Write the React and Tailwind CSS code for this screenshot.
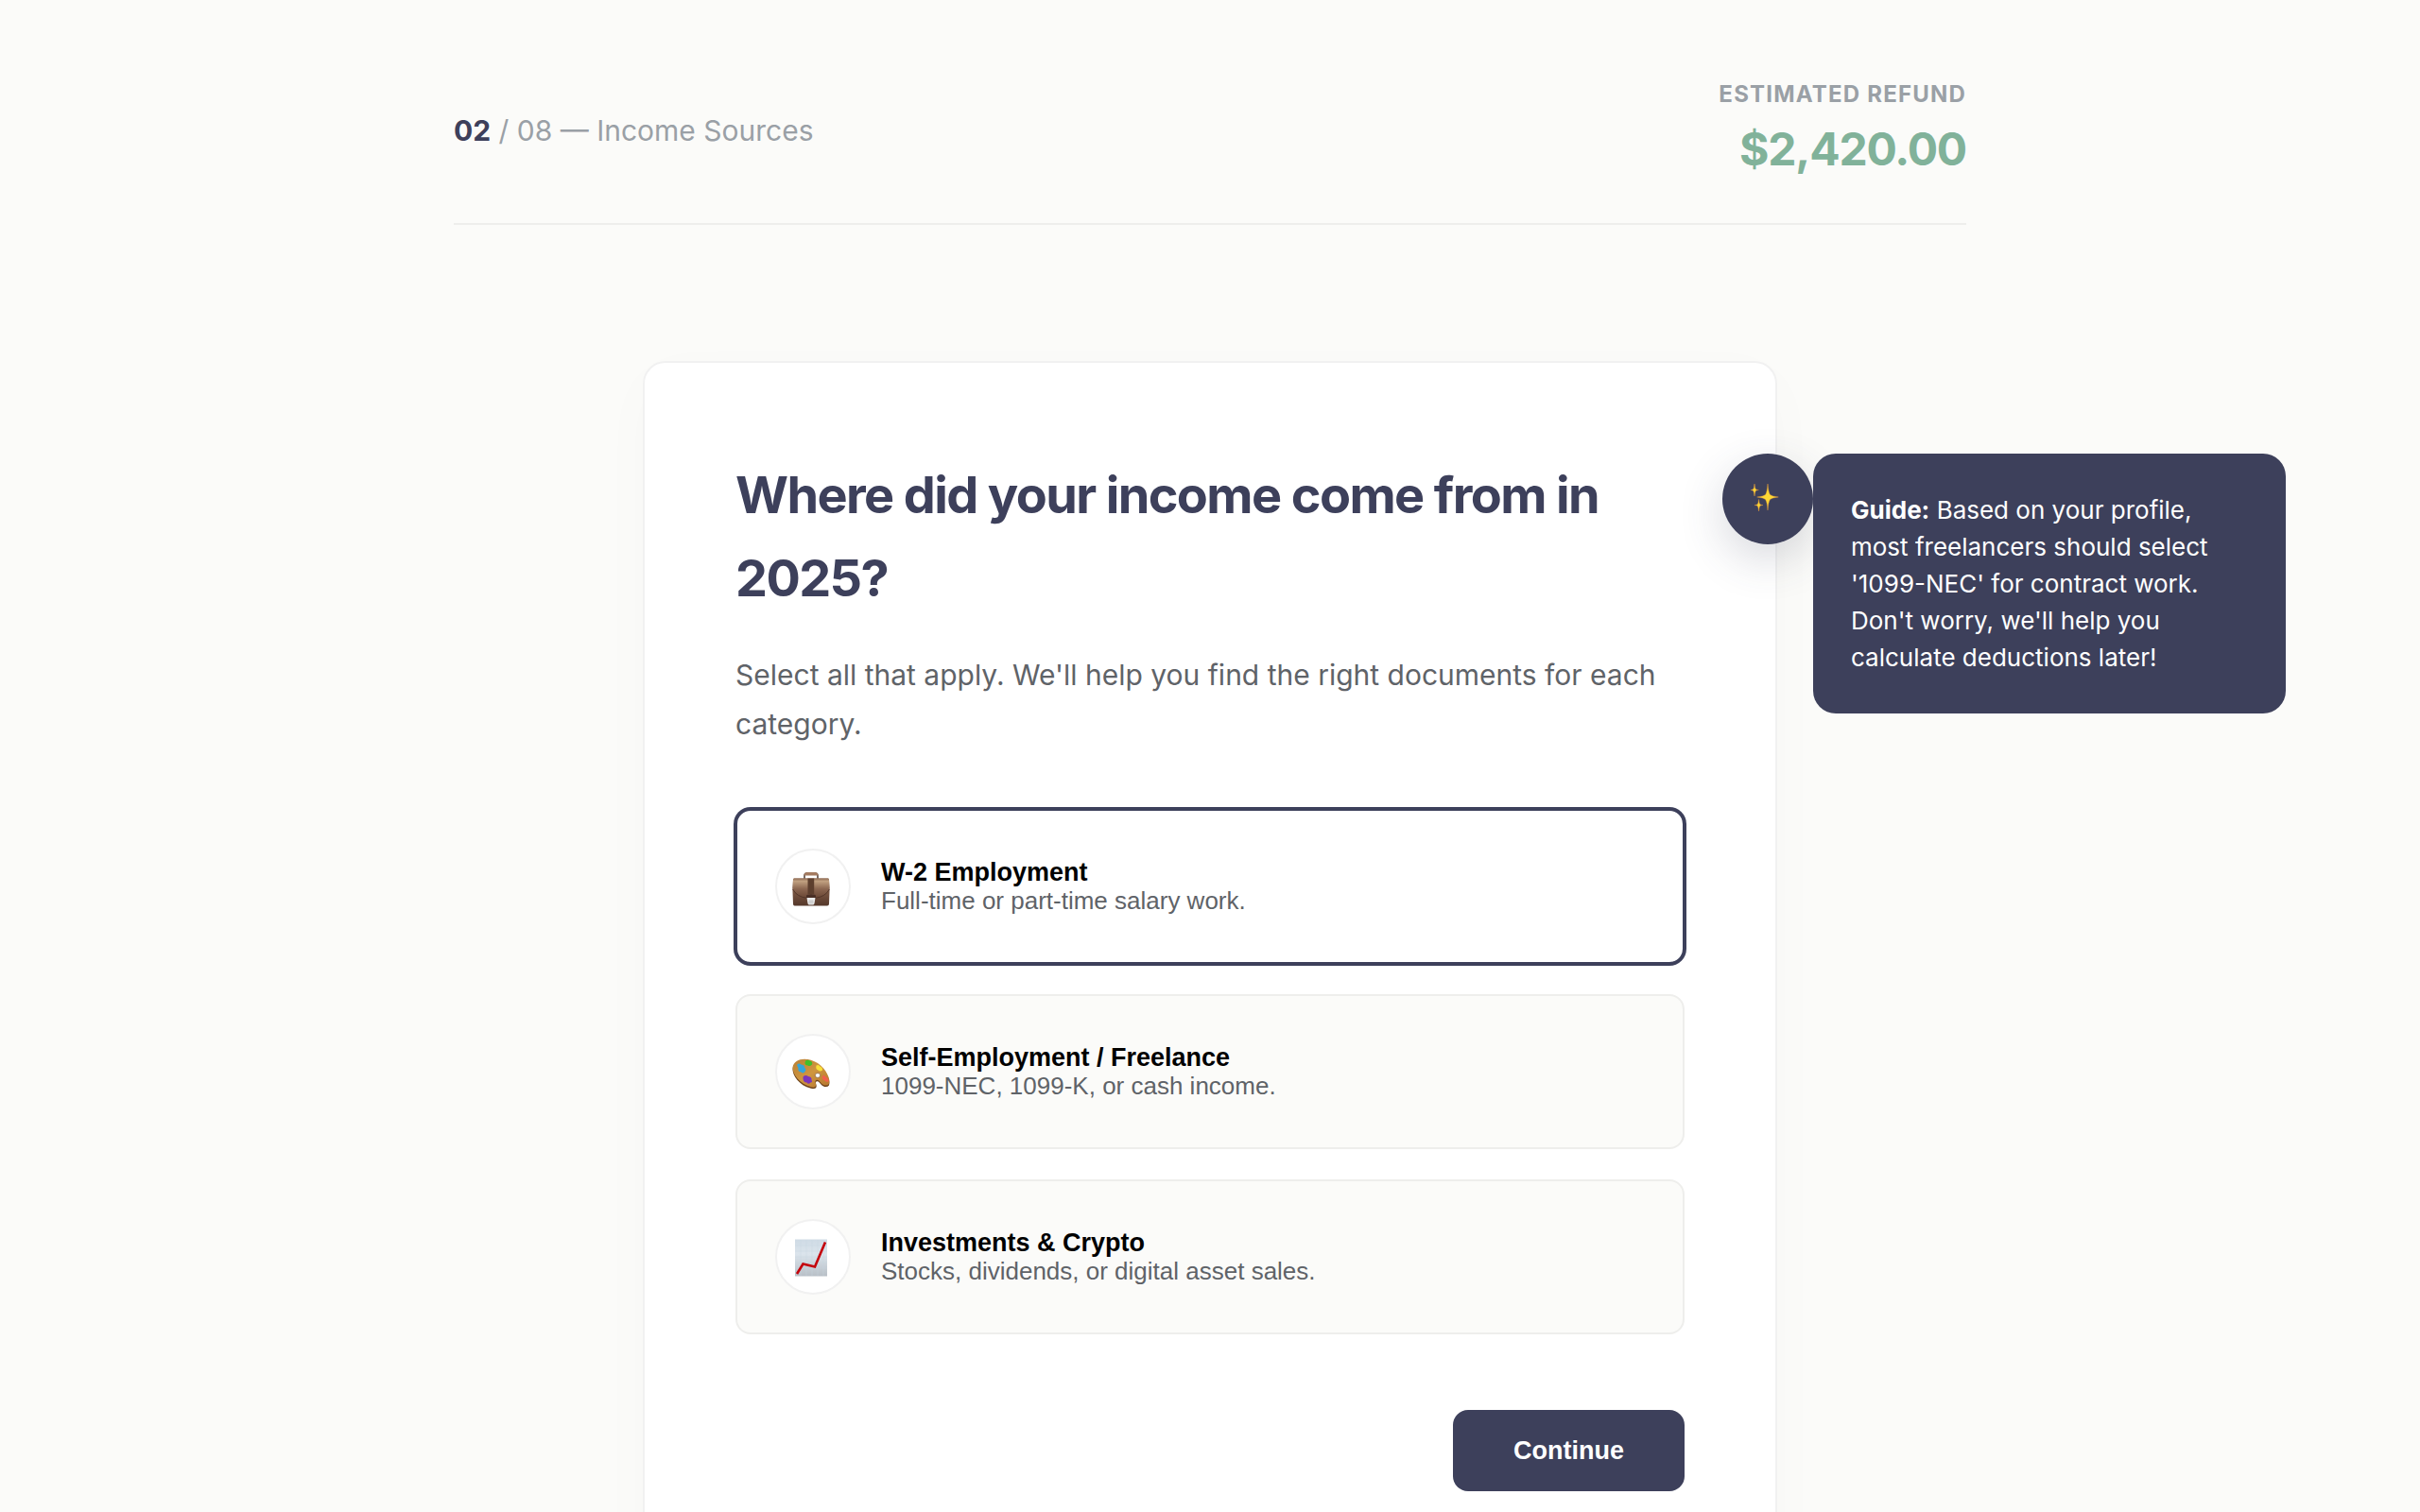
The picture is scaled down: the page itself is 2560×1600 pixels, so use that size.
import React, { useState } from 'react';

const sources = [
  {
    id: 'w2',
    title: 'W-2 Employment',
    text: 'Full-time or part-time salary work.',
    Icon: BriefcaseIcon,
  },
  {
    id: 'self',
    title: 'Self-Employment / Freelance',
    text: '1099-NEC, 1099-K, or cash income.',
    Icon: PaletteIcon,
  },
  {
    id: 'invest',
    title: 'Investments & Crypto',
    text: 'Stocks, dividends, or digital asset sales.',
    Icon: ChartIcon,
  },
];

function BriefcaseIcon() {
  return (
    <svg width="44" height="44" viewBox="0 -5 44 44" aria-hidden="true">
      <defs>
        <linearGradient id="leather" x1="0" y1="0" x2="0" y2="1">
          <stop offset="0" stopColor="#a07c62" />
          <stop offset="0.4" stopColor="#7f5a45" />
          <stop offset="1" stopColor="#55382b" />
        </linearGradient>
        <linearGradient id="flap" x1="0" y1="0" x2="0" y2="1">
          <stop offset="0" stopColor="#8f6c54" />
          <stop offset="0.15" stopColor="#c0a080" />
          <stop offset="0.55" stopColor="#8b6650" />
          <stop offset="1" stopColor="#6b4836" />
        </linearGradient>
      </defs>
      <path d="M13 9V5.5Q13 3 16 3H24Q27 3 27 5.5V9" fill="none" stroke="#3f2c24" strokeWidth="1.4" />
      <path d="M12.5 5.4Q12.5 2 16.5 2H23.5Q27.5 2 27.5 5.4Z" fill="#a47b60" />
      <path d="M2 8.5H38Q39 8.5 39 10L39.6 20 39 35.5Q39 37.5 37 37.5H2.6Q1 37.5 1 35.5L.4 20 1 10Q1 8.5 2 8.5Z" fill="url(#leather)" />
      <path d="M2 8.5H38Q39 8.5 39 10L39.5 19Q36 27.5 25 28.8H15Q4 27.5.5 19L1 10Q1 8.5 2 8.5Z" fill="url(#flap)" />
      <path d="M.6 20Q5 28 15 29.2H25Q35 28 39.4 20" fill="none" stroke="#4b3024" strokeWidth="0.8" />
      <path d="M16.5 8.5H23.2V25H16.5Z" fill="#5d3f2e" />
      <path d="M15 27Q15 25.2 20 25.2Q25 25.2 25 27V30H15Z" fill="#4a2f25" />
      <path d="M15.5 29H24.5L23.5 35Q23.3 36.6 21.8 36.6H18.2Q16.7 36.6 16.5 35Z" fill="#ececec" />
      <path d="M17.5 31.5H22.5V35.5H17.5Z" fill="#cfcfcf" />
    </svg>
  );
}

function PaletteIcon() {
  return (
    <svg width="44" height="44" viewBox="0 -5 44 44" aria-hidden="true">
      <defs>
        <linearGradient id="wood" x1="0" y1="0" x2="1" y2="1">
          <stop offset="0" stopColor="#b98136" />
          <stop offset="0.5" stopColor="#cf963f" />
          <stop offset="1" stopColor="#b5752e" />
        </linearGradient>
      </defs>
      <path d="M.5 14C.3 21 7 31.5 20 34.8Q24.5 35.8 25.5 33.5C26.5 31 23.5 28.5 26 27.3C28.5 26.5 29.5 30.5 33 32.5Q37 34 39 31.5C41 26.5 36 15.5 27 9.5C16 2.5 2 4 .5 14Z" fill="#6d421a" />
      <path d="M.5 12.5C.3 20 8 30 20 33.3Q24 34.3 25 32.3C26 29.8 22.8 27 25.8 25.8C28.5 25 29.5 29 33 31Q37 32.5 39 30C41 25 36 14 27 8C16 1 2 2.5.5 12.5Z" fill="url(#wood)" />
      <path d="M5 10Q7 7.5 9.5 9.5Q13.5 10 13 12.5Q15.5 15 13.5 17Q12 19.5 9.5 17.5Q5.5 17 6.5 13.5Z" fill="#36a5d8" />
      <path d="M14 5.5Q17 3.8 19 5.5Q22 7 21 9.5Q18.5 12 16.5 10.5Q13.5 10 13.5 8Z" fill="#41bf2a" />
      <path d="M25.5 10.5Q28 9 29.5 11.5Q32.5 12.5 32 15.5Q29.5 17.5 27.5 15.5Q24.5 14.5 25.5 10.5Z" fill="#f8e03a" />
      <path d="M32 21.5Q34 20 35.5 22.5Q39 24.5 38.5 27.5Q36 28.5 34.5 26.5Q31 25.5 32 21.5Z" fill="#f2604c" />
      <path d="M11.5 22.5Q14 20 17 22Q21 22.5 20.5 26Q22 28 19.5 28.5Q17 31 15.5 28.5Q11 28.5 11.5 22.5Z" fill="#7c35ba" />
      <ellipse cx="27" cy="21" rx="2.8" ry="2.4" fill="#fff" stroke="#6d421a" strokeWidth="0.6" />
    </svg>
  );
}

function ChartIcon() {
  return (
    <svg width="44" height="44" viewBox="0 -3 44 44" aria-hidden="true">
      <defs>
        <linearGradient id="sheet" x1="0" y1="0" x2="0" y2="1">
          <stop offset="0" stopColor="#cfdbe5" />
          <stop offset="0.4" stopColor="#dbe4ec" />
          <stop offset="1" stopColor="#b8bfc6" />
        </linearGradient>
      </defs>
      <rect x="3" y="0.5" width="34" height="39" fill="url(#sheet)" />
      <path d="M9 1V39M15 1V39M21 1V39M27 1V39M33 1V39M3 7H37M3 13H37M3 19H37M3 25H37M3 31H37" stroke="#c6d4e0" strokeWidth="0.4" />
      <path d="M5 37L11.5 26.5L24 29.5L35 3.5" fill="none" stroke="#c4040c" strokeWidth="2.6" />
    </svg>
  );
}

function SparklesIcon() {
  return (
    <svg width="36" height="36" viewBox="0 -2 36 36" aria-hidden="true">
      <g fill="#fdd835" stroke="#e8963a" strokeWidth="0.4">
        <path d="M18 0Q18.6 9 20.5 11.5Q22.5 13.3 29.3 14Q22.5 14.7 20.5 16.5Q18.6 19 18 28Q17.4 19 15.5 16.5Q13.5 14.7 6.7 14Q13.5 13.3 15.5 11.5Q17.4 9 18 0Z" />
        <path d="M4 0Q4.4 4.5 5.2 5.5Q6 6.3 8.3 6.5Q6 6.7 5.2 7.5Q4.4 8.5 4 13Q3.6 8.5 2.8 7.5Q2 6.7-.3 6.5Q2 6.3 2.8 5.5Q3.6 4.5 4 0Z" />
        <path d="M8.5 16.5Q8.9 20.5 9.7 21.5Q10.5 22.3 13 22.5Q10.5 22.7 9.7 23.5Q8.9 24.5 8.5 29Q8.1 24.5 7.3 23.5Q6.5 22.7 4 22.5Q6.5 22.3 7.3 21.5Q8.1 20.5 8.5 16.5Z" />
      </g>
    </svg>
  );
}

function App() {
  const [selected, setSelected] = useState(['w2']);

  const toggle = (id) => {
    setSelected((prev) => (prev.includes(id) ? prev.filter((s) => s !== id) : [...prev, id]));
  };

  return (
    <div className="min-h-screen bg-[#fbfbf9] font-['Inter',sans-serif] text-[#3d405b]">
      <div className="max-w-[1600px] mx-auto py-20">
        {/* Header */}
        <header className="flex items-center justify-between pb-10 mb-36 border-b-2 border-[#eeeeec]">
          <p className="text-3xl leading-[52px] text-[#9aa0a6]">
            <strong className="font-bold text-[#3d405b]">02</strong> / 08 — Income Sources
          </p>
          <div className="text-right">
            <div className="text-2xl leading-[39px] font-bold tracking-[0.05em] uppercase text-[#9aa0a6]">
              Estimated Refund
            </div>
            <div className="text-5xl leading-[77px] font-bold tracking-tight text-[#81b29a]">$2,420.00</div>
          </div>
        </header>

        {/* Question card */}
        <main className="relative max-w-[1200px] mx-auto p-24 bg-white rounded-3xl border-2 border-[#f1f1f1] shadow-[0_16px_64px_rgba(0,0,0,0.02)]">
          <h1 className="mb-8 text-[54px] leading-[88px] font-bold tracking-[-0.03em]">
            Where did your income come from in 2025?
          </h1>
          <p className="mb-16 text-3xl leading-[52px] text-[#5f6368]">
            Select all that apply. We'll help you find the right documents for each category.
          </p>

          <div className="flex flex-col gap-8 font-['Liberation_Sans',sans-serif]">
            {sources.map(({ id, title, text, Icon }) => (
              <button
                key={id}
                type="button"
                aria-pressed={selected.includes(id)}
                onClick={() => toggle(id)}
                className={`flex items-center gap-8 p-10 rounded-2xl border-2 text-left cursor-pointer ${selected.includes(id)
                    ? 'bg-white border-[#3d405b] ring-2 ring-[#3d405b]'
                    : 'bg-[#fbfbf9] border-[#eeeeec]'
                  }`}
              >
                <span className="flex items-center justify-center size-20 rounded-full bg-white border-2 border-[#f1f1f1]">
                  <Icon />
                </span>
                <span className="flex flex-col">
                  <span className="text-[27px] leading-[30px] font-bold text-black">{title}</span>
                  <span className="text-[26px] leading-[30px] text-[#5f6368]">{text}</span>
                </span>
              </button>
            ))}
          </div>

          <div className="flex justify-end mt-20">
            <button
              type="button"
              className="px-16 py-7 rounded-2xl bg-[#3d405b] font-['Liberation_Sans',sans-serif] text-[27px] leading-[30px] font-bold text-white cursor-pointer"
            >
              Continue
            </button>
          </div>

          {/* Guide bubble, hangs over the card edge */}
          <aside className="absolute top-24 -right-10">
            <button
              type="button"
              aria-label="Guide"
              className="flex items-center justify-center size-24 rounded-full bg-[#3d405b] shadow-[0_16px_48px_rgba(61,64,91,0.2)] cursor-pointer"
            >
              <SparklesIcon />
            </button>
            <p className="absolute top-0 left-full w-[500px] p-10 rounded-3xl bg-[#3d405b] text-[26px] leading-[39px] text-white">
              <strong className="font-bold">Guide:</strong> Based on your profile, most freelancers should select '1099-NEC' for contract work. Don't worry, we'll help you calculate deductions later!
            </p>
          </aside>
        </main>
      </div>
    </div>
  );
}

export default App;
